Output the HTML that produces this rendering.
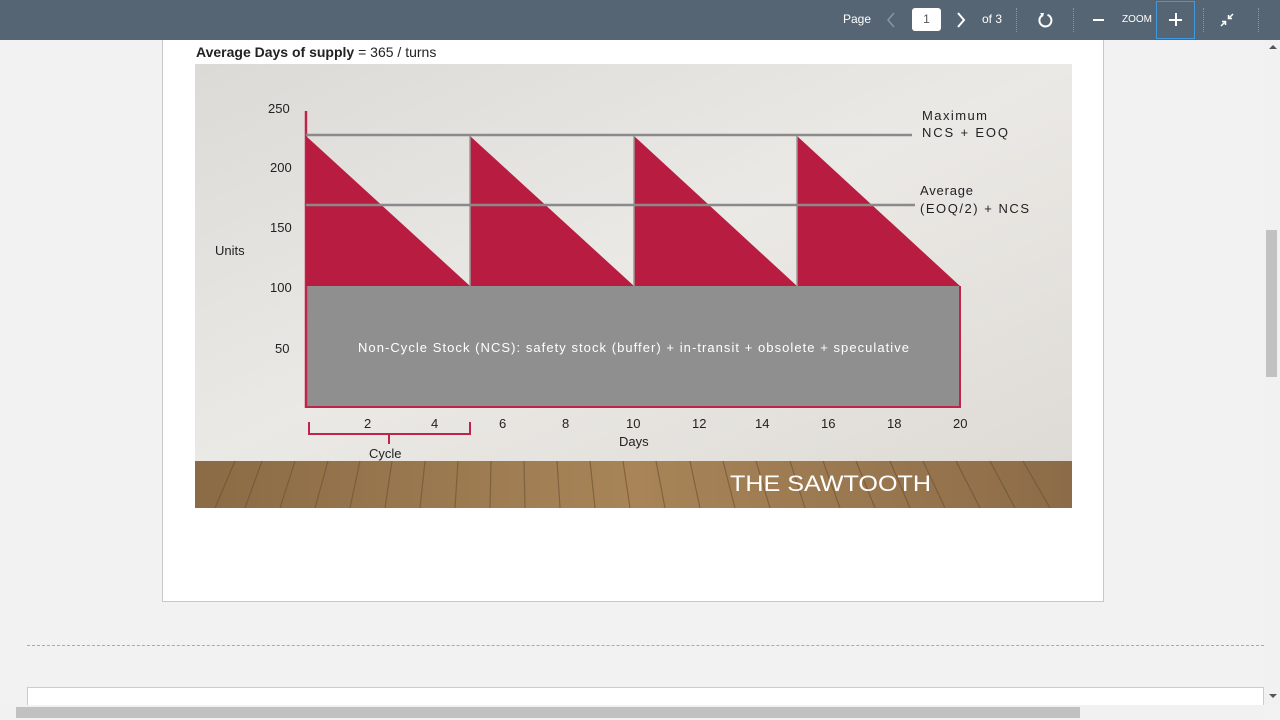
<!DOCTYPE html>
<html><head><meta charset="utf-8"><style>
*{margin:0;padding:0;box-sizing:border-box}
body{width:1280px;height:720px;overflow:hidden;background:#f2f2f2;font-family:"Liberation Sans",sans-serif;position:relative}
.tb{position:absolute;left:0;top:0;width:1280px;height:40px;background:#566573;color:#fff;font-size:12px}
.tb span{position:absolute;top:12px}
.sep{position:absolute;top:8px;width:1px;height:24px;border-left:1px dotted #8a96a2}
.page{position:absolute;left:162px;top:40px;width:942px;height:562px;background:#fff;border:1px solid #c8c8c8;border-top:none}
</style></head><body>
<div class="tb">
<span style="left:843px">Page</span>
<svg style="position:absolute;left:886px;top:12px" width="10" height="16"><path d="M8 1L2 8L8 15" fill="none" stroke="#8a96a2" stroke-width="1.5"/></svg>
<div style="position:absolute;left:912px;top:8px;width:29px;height:23px;background:#fff;border-radius:3px;color:#555;text-align:center;line-height:23px">1</div>
<svg style="position:absolute;left:956px;top:12px" width="10" height="16"><path d="M2 1L8 8L2 15" fill="none" stroke="#fff" stroke-width="2"/></svg>
<span style="left:982px">of 3</span>
<div class="sep" style="left:1016px"></div>
<svg style="position:absolute;left:1037px;top:12px" width="17" height="17" viewBox="0 0 17 17"><path d="M5 3.5 A6 6 0 1 0 10.5 2.8" fill="none" stroke="#fff" stroke-width="2"/><path d="M3 1 L7 1 L6 5 Z" fill="#fff"/></svg>
<div class="sep" style="left:1073px"></div>
<div style="position:absolute;left:1093px;top:19px;width:11px;height:2px;background:#fff"></div>
<span style="left:1122px;font-size:10px;top:14px">ZOOM</span>
<div style="position:absolute;left:1156px;top:1px;width:39px;height:38px;border:1px solid #3b9ae1"></div>
<div style="position:absolute;left:1169px;top:19px;width:13px;height:2px;background:#fff"></div>
<div style="position:absolute;left:1175px;top:13px;width:2px;height:13px;background:#fff"></div>
<div class="sep" style="left:1203px"></div>
<svg style="position:absolute;left:1220px;top:13px" width="14" height="14" viewBox="0 0 14 14"><path d="M1 13 L5 9 M2 8.5 H5.5 V12 M13 1 L9 5 M8.5 2 V5.5 H12" fill="none" stroke="#fff" stroke-width="1.5"/></svg>
<div class="sep" style="left:1258px"></div>
</div>
<div class="page">
<div style="position:absolute;left:33px;top:4px;font-size:14px;color:#222"><b>Average Days of supply</b> = 365 / turns</div>
</div>
<svg style="position:absolute;left:195px;top:64px" width="877" height="444" viewBox="195 64 877 444">
<defs><linearGradient id="bg" x1="0" y1="0" x2="1" y2="1"><stop offset="0" stop-color="#dcdad6"/><stop offset=".5" stop-color="#ebe9e5"/><stop offset="1" stop-color="#dedbd6"/></linearGradient>
<linearGradient id="wd" x1="0" y1="0" x2="1" y2="0"><stop offset="0" stop-color="#8a6b45"/><stop offset=".5" stop-color="#a88458"/><stop offset="1" stop-color="#8c6c48"/></linearGradient></defs>
<rect x="195" y="64" width="877" height="397" fill="url(#bg)"/>
<rect x="195" y="461" width="877" height="47" fill="url(#wd)"/>
<g stroke="#6a4f30" stroke-width="1.2" opacity=".6">
<path d="M215 508L235 461M245 508L262 461M280 508L295 461M315 508L328 461M350 508L360 461M385 508L392 461M420 508L425 461M455 508L458 461M490 508L491 461M525 508L524 461M560 508L557 461M595 508L590 461M630 508L623 461M665 508L656 461M700 508L690 461M735 508L723 461M770 508L756 461M805 508L790 461M840 508L823 461M875 508L856 461M910 508L890 461M945 508L923 461M980 508L956 461M1015 508L990 461M1050 508L1023 461"/></g>
<text x="730" y="491" font-family="Liberation Sans" font-size="22" fill="#fff" textLength="201" lengthAdjust="spacingAndGlyphs">THE SAWTOOTH</text>
<rect x="307" y="286" width="653" height="121" fill="#8f8f8f"/>
<path d="M306 286V407H960V286" fill="none" stroke="#c0244a" stroke-width="2"/>
<path d="M306 111V408" stroke="#c0244a" stroke-width="2.5"/>
<g fill="#b81c40">
<path d="M306 136L470 286H306Z"/><path d="M470 136L634 286H470Z"/><path d="M634 136L797 286H634Z"/><path d="M797 136L960 286H797Z"/></g>
<g stroke="#999" stroke-width="1.5"><path d="M470 136V286M634 136V286M797 136V286"/></g>
<path d="M306 135H912M306 205H915" stroke="#8a8a8a" stroke-width="2.5"/>
<g font-family="Liberation Sans" font-size="13" fill="#222">
<text x="268" y="113">250</text><text x="270" y="172">200</text><text x="270" y="232">150</text><text x="270" y="292">100</text><text x="275" y="353">50</text>
<text x="215" y="255">Units</text>
<text x="922" y="120" textLength="65">Maximum</text><text x="922" y="137" textLength="86">NCS + EOQ</text>
<text x="920" y="195" textLength="53">Average</text><text x="920" y="213" textLength="109">(EOQ/2) + NCS</text>
<text x="358" y="352" fill="#fff" textLength="551">Non-Cycle Stock (NCS):  safety stock (buffer) + in-transit + obsolete + speculative</text>
<text x="364" y="428">2</text><text x="431" y="428">4</text><text x="499" y="428">6</text><text x="562" y="428">8</text><text x="626" y="428">10</text><text x="692" y="428">12</text><text x="755" y="428">14</text><text x="821" y="428">16</text><text x="887" y="428">18</text><text x="953" y="428">20</text>
<text x="619" y="446">Days</text><text x="369" y="458">Cycle</text></g>
<path d="M309 422V434H470V422M389 434V444" fill="none" stroke="#c0244a" stroke-width="2"/>
</svg>
<div style="position:absolute;left:1264px;top:40px;width:16px;height:665px;background:#f1f1f1"></div>
<div style="position:absolute;left:1266px;top:230px;width:11px;height:147px;background:#c1c1c1"></div>
<div style="position:absolute;left:1269px;top:45px;border:4px solid transparent;border-bottom:4px solid #555;border-top:none"></div>
<div style="position:absolute;left:1269px;top:694px;border:4px solid transparent;border-top:4px solid #555;border-bottom:none"></div>
<div style="position:absolute;left:27px;top:645px;width:1237px;border-top:1px dashed #aaa"></div>
<div style="position:absolute;left:27px;top:687px;width:1237px;height:18px;background:#fff;border:1px solid #ccc;border-bottom:none"></div>
<div style="position:absolute;left:0;top:705px;width:1264px;height:15px;background:#f1f1f1"></div>
<div style="position:absolute;left:16px;top:707px;width:1064px;height:11px;background:#c1c1c1"></div>
</body></html>
